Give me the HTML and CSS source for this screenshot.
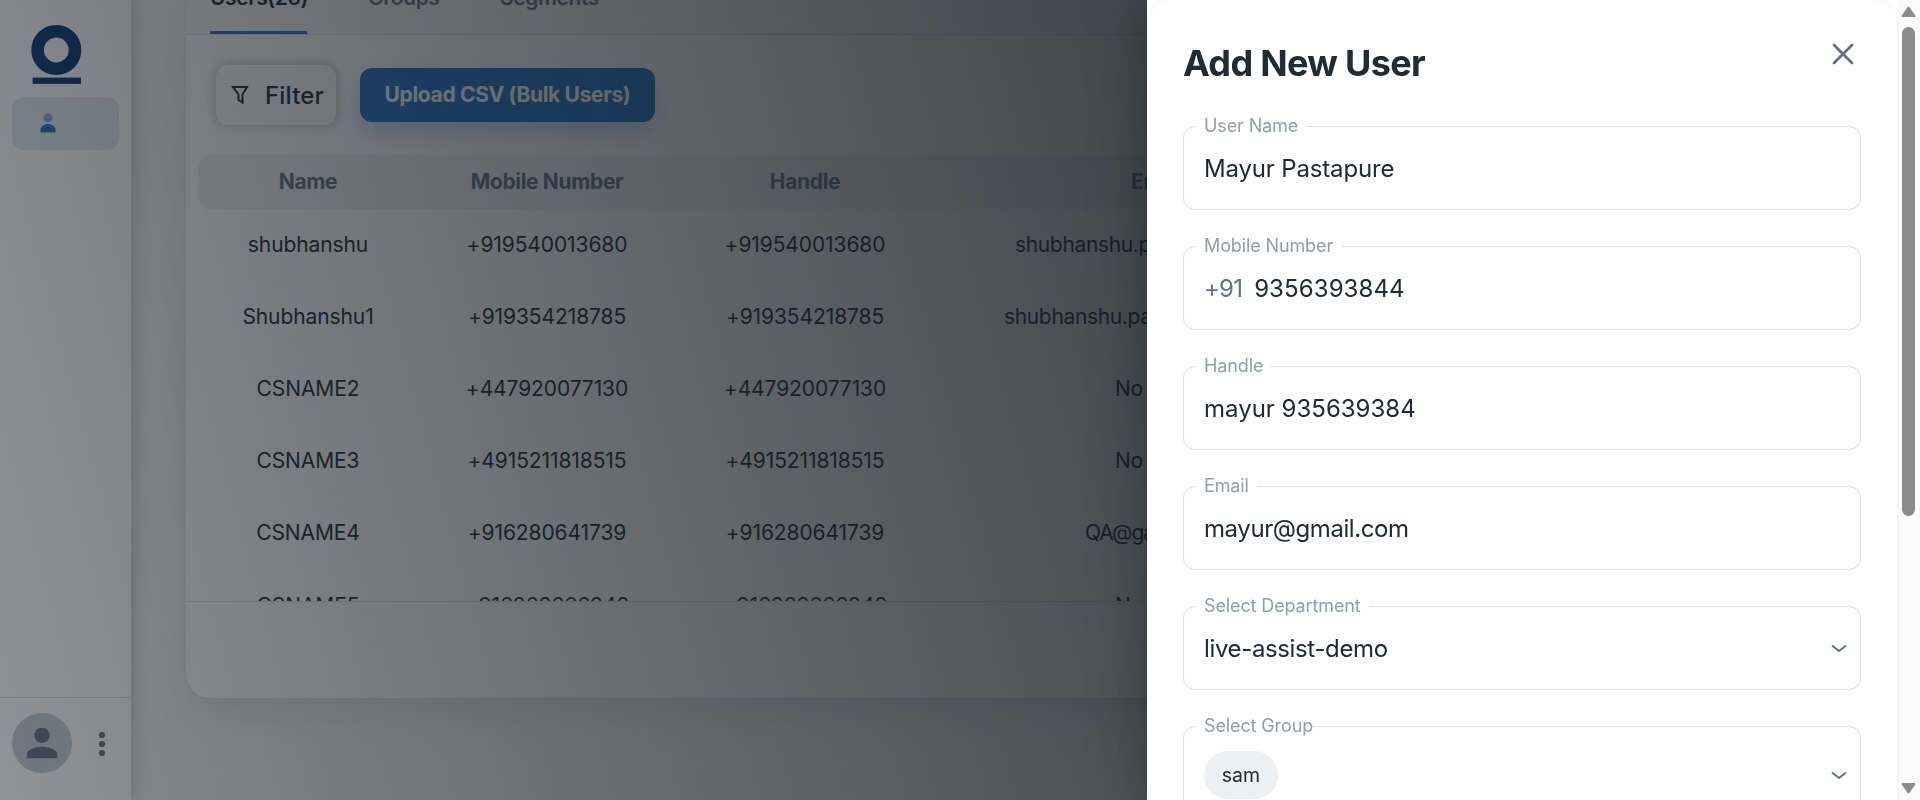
FILE: index.html
```html
<!DOCTYPE html>
<html lang="en">
<head>
<meta charset="utf-8">
<title>Add New User</title>
<link rel="stylesheet" href="styles.css">
</head>
<body>
<div class="app">
  <aside class="sidebar">
    <svg class="logo" width="52" height="60" viewBox="0 0 52 60">
      <circle cx="25.3" cy="25" r="18.7" fill="none" stroke="#0a3874" stroke-width="12.6"/>
      <rect x="1.7" y="52.6" width="48.3" height="6.3" fill="#0a3874"/>
    </svg>
    <a class="nav-item">
      <svg width="16" height="20" viewBox="0 0 16 20">
        <circle cx="8" cy="4.7" r="4.5" fill="#2272bf" opacity=".5"/>
        <path d="M.5 19.5v-2C.5 13.500 4 11 8 11s7.500 2.500 7.500 6.500v2z" fill="#2272bf"/>
      </svg>
    </a>
    <div class="account">
      <span class="avatar">
        <svg width="46" height="46" viewBox="0 0 24 24" fill="#637381"><path d="M12 12c2.210 0 4-1.790 4-4s-1.790-4-4-4-4 1.790-4 4 1.790 4 4 4m0 2c-2.670 0-8 1.340-8 4v2h16v-2c0-2.660-5.330-4-8-4"/></svg>
      </span>
      <svg class="dots" width="8" height="26" viewBox="0 0 8 26" fill="#637381"><circle cx="4" cy="4" r="3.100"/><circle cx="4" cy="13" r="3.100"/><circle cx="4" cy="22" r="3.100"/></svg>
    </div>
  </aside>
  <main class="main">
    <section class="card">
      <nav class="tabs">
        <span class="tab tab-active">Users(26)</span>
        <span class="tab tab-groups">Groups</span>
        <span class="tab tab-segments">Segments</span>
      </nav>
      <div class="toolbar">
        <button class="filter">
          <svg width="18" height="20" viewBox="0 0 18 20" fill="none" stroke="#212b36" stroke-width="2"><path d="M2 2h14l-4.500 7.500V17.500L7.500 15V9.500z"/></svg>
          <span>Filter</span>
        </button>
        <button class="upload">Upload CSV (Bulk Users)</button>
      </div>
      <div class="table">
        <div class="row head"><span>Name</span><span>Mobile Number</span><span>Handle</span><span class="email" style="padding-left:181px">Email</span></div>
        <div class="row"><span>shubhanshu</span><span>+919540013680</span><span>+919540013680</span><span class="email" style="padding-left:65px">shubhanshu.pa</span></div>
        <div class="row"><span>Shubhanshu1</span><span>+919354218785</span><span>+919354218785</span><span class="email" style="padding-left:54px">shubhanshu.pa</span></div>
        <div class="row"><span>CSNAME2</span><span>+447920077130</span><span>+447920077130</span><span class="email" style="padding-left:165px">No</span></div>
        <div class="row"><span>CSNAME3</span><span>+4915211818515</span><span>+4915211818515</span><span class="email" style="padding-left:165px">No</span></div>
        <div class="row"><span>CSNAME4</span><span>+916280641739</span><span>+916280641739</span><span class="email email-tight" style="padding-left:135px">QA@ga</span></div>
        <div class="row row-cut"><span>CSNAME5</span><span>+916263666942</span><span>+916263666942</span><span class="email" style="padding-left:165px">No</span></div>
      </div>
      <div class="pager"></div>
    </section>
  </main>
</div>
<div class="backdrop"></div>
<div class="drawer">
  <div class="sheet">
    <header class="sheet-head">
      <h2>Add New User</h2>
      <svg class="close" width="22" height="22" viewBox="0 0 22 22" stroke="#637381" stroke-width="2.800" stroke-linecap="round"><path d="M2 2l18 18M20 2L2 20"/></svg>
    </header>
    <fieldset class="field"><legend>User Name</legend><span class="v-user">Mayur Pastapure</span></fieldset>
    <fieldset class="field"><legend>Mobile Number</legend><span class="prefix">+91</span><span class="v-mobile">9356393844</span></fieldset>
    <fieldset class="field"><legend>Handle</legend><span class="v-handle">mayur 935639384</span></fieldset>
    <fieldset class="field"><legend>Email</legend><span class="v-email">mayur@gmail.com</span></fieldset>
    <fieldset class="field"><legend>Select Department</legend><span class="v-dept">live-assist-demo</span>
      <svg class="chev" width="16" height="9" viewBox="0 0 16 9" fill="none" stroke="#637381" stroke-width="2"><path d="M1 1.500L8 7l7-5.500"/></svg></fieldset>
    <fieldset class="field group"><legend class="l-group">Select Group</legend><span class="chip">sam</span>
      <svg class="chev" width="16" height="9" viewBox="0 0 16 9" fill="none" stroke="#637381" stroke-width="2"><path d="M1 1.500L8 7l7-5.500"/></svg></fieldset>
  </div>
  <div class="scrollbar">
    <svg width="15" height="12" viewBox="0 0 15 12" fill="#8b8b8b" stroke="#8b8b8b" stroke-width="2" stroke-linejoin="round"><path d="M7.500 1.500L13.500 10H1.500z"/></svg>
    <span class="thumb"></span>
    <svg class="down" width="15" height="12" viewBox="0 0 15 12" fill="#8b8b8b" stroke="#8b8b8b" stroke-width="2" stroke-linejoin="round"><path d="M7.500 10.500L13.500 2H1.500z"/></svg>
  </div>
</div>
</body>
</html>
```
FILE: styles.css
```css
* { box-sizing: border-box; }
html { height: 800px; overflow: hidden; }
body { margin: 0; width: 1920px; height: 800px; overflow: hidden; background: #f4f5f7; color: #212b36; font-family: Inter, "Liberation Sans", sans-serif; }
button { border: 0; font-family: inherit; color: inherit; margin: 0; padding: 0; }
.app { display: flex; height: 800px; overflow: hidden; }

.sidebar { width: 131px; flex: none; background: #fff; display: flex; flex-direction: column; padding-top: 25px; box-shadow: 4px 0 16px rgba(80, 90, 100, .26); }
.logo { margin-left: 31px; flex: none; }
.nav-item { display: flex; align-items: center; width: 107px; height: 53px; margin: 12px 0 0 12px; padding: 0 0 1px 28px; border-radius: 12px; background: #e4edf4; }
.account { margin-top: auto; height: 103px; border-top: 1px solid #dfe3e8; display: flex; align-items: flex-start; padding: 15px 0 0 12px; }
.avatar { width: 60px; height: 60px; border-radius: 50%; background: #c4cdd5; display: flex; align-items: center; justify-content: center; }
.dots { margin: 18px 0 0 26px; }

.main { flex: 1; padding-left: 55px; }
.card { width: 1700px; height: 698px; background: #fff; border-radius: 0 0 24px 24px; box-shadow: 0 0 3px rgba(145, 158, 171, .2), 0 18px 36px -6px rgba(145, 158, 171, .24); display: flex; flex-direction: column; overflow: hidden; }
.tabs { height: 35px; flex: none; background: #f4f6f8; border-bottom: 1px solid #dfe3e8; padding-left: 24px; display: flex; align-items: flex-end; font-size: 21px; font-weight: 600; color: #637381; }
.tab { height: 49px; line-height: 26px; letter-spacing: -.4px; }
.tab-active { color: #212b36; width: 97px; border-bottom: 3px solid #2272bf; }
.tab-groups { margin-left: 61px; width: 71px; }
.tab-segments { margin-left: 61px; }
.toolbar { display: flex; align-items: center; height: 120px; flex: none; padding-left: 30px; gap: 24px; }
.filter { width: 120px; height: 60px; border-radius: 12px; background: #fff; box-shadow: 0 0 10px 2px rgba(100, 110, 120, .35); display: flex; align-items: center; padding-left: 15px; gap: 16px; font-size: 24px; font-weight: 500; letter-spacing: .2px; }
.upload { width: 295px; height: 54px; padding-bottom: 2px; border-radius: 12px; background: #2272bf; color: #fff; font-size: 21px; font-weight: 700; letter-spacing: -.34px; box-shadow: 0 12px 24px rgba(34, 114, 191, .28); }

.table { height: 446px; flex: none; overflow: hidden; padding-left: 12px; }
.row { display: flex; align-items: center; height: 72px; padding-bottom: 2px; font-size: 21px; white-space: nowrap; letter-spacing: -.1px; }
.row > span { flex: none; width: 220px; text-align: center; }
.row > span:nth-child(2), .row > span:nth-child(3) { width: 258px; }
.row > .email { width: 730px; text-align: left; margin-left: 16px; letter-spacing: -.35px; }
.row > .email-tight { letter-spacing: -1px; }
.row-cut { padding-bottom: 0; }
.head { height: 54px; background: #f0f2f4; border-radius: 12px; font-weight: 700; letter-spacing: -.35px; color: #637381; }
.pager { flex: 1; border-top: 1px solid #dfe3e8; }

.backdrop { position: fixed; inset: 0; background: linear-gradient(75deg, rgba(22, 28, 36, .48) 0%, rgb(22, 28, 36) 100%); }

.drawer { position: fixed; top: 0; right: 0; width: 773px; height: 800px; display: flex; background: #fff; box-shadow: -8px 0 50px rgba(0, 0, 0, .24); }
.sheet { width: 750px; padding: 44px 36px 0; border-radius: 24px 24px 0 0; box-shadow: 0 0 3px rgba(145, 158, 171, .25); clip-path: inset(0 -3px 0 0); }
.sheet-head { display: flex; justify-content: space-between; height: 70px; }
.sheet-head h2 { margin: 0; font-size: 36px; line-height: 38px; font-weight: 700; letter-spacing: -.68px; }
.close { margin: -1px 7px 0 0; }
.field { margin: 0 0 24px; border: 1px solid #dce0e4; border-radius: 12px; height: 96px; padding: 0 13px 10px 12px; display: flex; align-items: center; font-size: 24px; width: 678px; min-width: 0; }
.field legend { font-size: 18px; line-height: 24px; padding: 0 8px; color: #919eab; letter-spacing: -.12px; }
.field > span { margin-left: 8px; }
.field > .prefix { color: #637381; letter-spacing: -.8px; }
.field > .v-mobile { margin-left: 12px; letter-spacing: .1px; }
.v-user { letter-spacing: -.16px; }
.v-email { letter-spacing: -.42px; }
.v-dept { letter-spacing: -.36px; }
.chev { margin-left: auto; }
.group { height: 109px; margin-bottom: 0; }
.field .l-group { padding-right: 0; }
.chip { background: #edeff1; border-radius: 24px; width: 74px; height: 48px; line-height: 48px; text-align: center; font-size: 19.5px; }

.scrollbar { width: 23px; background: #fbfbfb; display: flex; flex-direction: column; align-items: center; padding: 6px 0; }
.thumb { width: 13px; height: 489px; border-radius: 7px; background: #8b8b8b; margin-top: 9px; }
.down { margin-top: auto; }
```
